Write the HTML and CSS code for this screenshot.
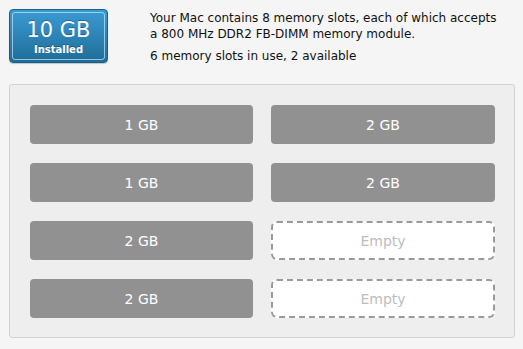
FILE: index.html
```html
<!DOCTYPE html>
<html>
<head>
<meta charset="utf-8">
<link rel="stylesheet" href="styles.css">
</head>
<body>
<div class="top">
  <div class="badge">
    <div class="badge-inner">
      <div class="amount">10 GB</div>
      <div class="label">Installed</div>
    </div>
  </div>
  <div class="info">
    <p class="desc">Your Mac contains 8 memory slots, each of which accepts<br>a 800 MHz DDR2 FB-DIMM memory module.</p>
    <p class="usage">6 memory slots in use, 2 available</p>
  </div>
</div>
<div class="panel">
  <div class="slot">1 GB</div>
  <div class="slot">2 GB</div>
  <div class="slot">1 GB</div>
  <div class="slot">2 GB</div>
  <div class="slot">2 GB</div>
  <div class="slot empty">Empty</div>
  <div class="slot">2 GB</div>
  <div class="slot empty">Empty</div>
</div>
</body>
</html>
```
FILE: styles.css
```css
html, body {
  margin: 0;
  padding: 0;
  background: #f5f5f5;
  width: 523px;
  height: 349px;
  overflow: hidden;
  font-family: "DejaVu Sans", "Lucida Grande", sans-serif;
}
.top {
  display: flex;
  padding: 9px 0 0 9px;
  height: 84px;
  box-sizing: border-box;
}
.badge {
  width: 99px;
  height: 54px;
  box-sizing: border-box;
  border: 1px solid #1d5f87;
  border-radius: 4px;
  background: linear-gradient(#3a9bd4, #1f6d98);
  padding: 2px;
  box-shadow: 0 1px 1px rgba(0,0,0,0.2);
}
.badge-inner {
  height: 100%;
  box-sizing: border-box;
  border: 1px solid rgba(200,230,250,0.7);
  border-radius: 3px;
  display: flex;
  flex-direction: column;
  align-items: center;
  color: #fff;
}
.amount {
  font-size: 21px;
  line-height: 22px;
  margin-top: 6px;
  text-shadow: 0 -1px 0 rgba(0,0,0,0.3);
}
.label {
  font-size: 10px;
  font-weight: bold;
  line-height: 13px;
  margin-top: 2px;
  text-shadow: 0 -1px 0 rgba(0,0,0,0.3);
}
.info {
  margin-left: 42px;
  font-size: 12px;
  color: #111;
}
.desc {
  margin: 1px 0 0;
  line-height: 16px;
}
.usage {
  margin: 6px 0 0;
  line-height: 16px;
}
.panel {
  margin: 0 8px 0 9px;
  height: 254px;
  box-sizing: border-box;
  border: 1px solid #d2d2d2;
  border-radius: 3px;
  background: #eeeeee;
  padding: 20px 19px 19px 20px;
  display: grid;
  grid-template-columns: 223px 224px;
  grid-auto-rows: 39px;
  column-gap: 18px;
  row-gap: 19px;
}
.slot {
  background: #919191;
  border-radius: 4px;
  color: #fff;
  font-size: 14px;
  display: flex;
  align-items: center;
  justify-content: center;
}
.empty {
  background: #fff;
  border: 2px dashed #9a9a9a;
  border-radius: 6px;
  color: #bdbdbd;
}
```
